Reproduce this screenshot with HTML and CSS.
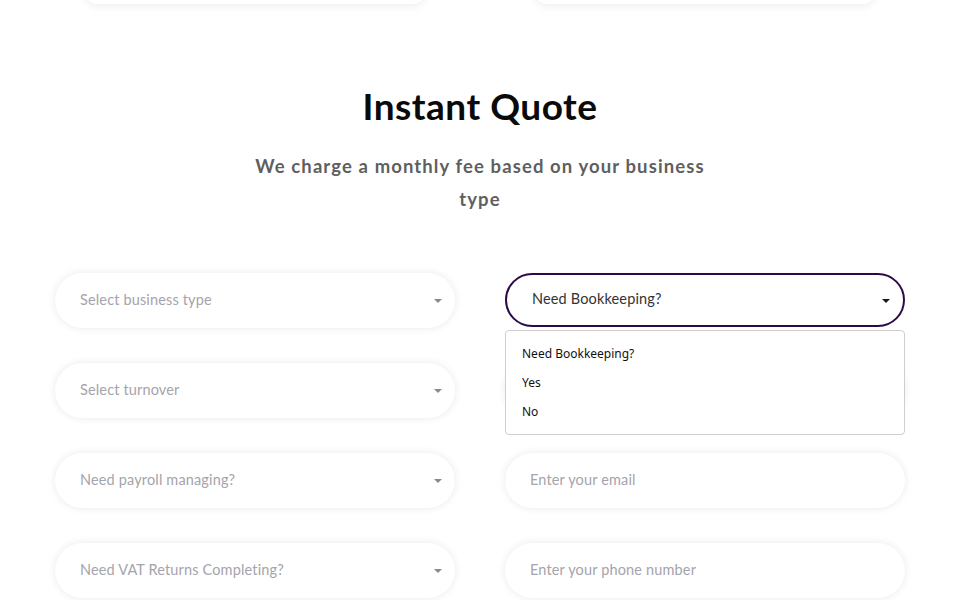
FILE: index.html
```html
<!DOCTYPE html>
<html lang="en">
<head>
<meta charset="utf-8">
<title>Instant Quote</title>
<link rel="stylesheet" href="styles.css">
</head>
<body>
<div class="top-cards">
  <div class="card"></div>
  <div class="card"></div>
</div>
<section class="quote">
  <h1 class="title">Instant Quote</h1>
  <p class="subtitle">We charge a monthly fee based on your business type</p>
  <form class="form">
    <div class="field select"><span class="placeholder">Select business type</span><span class="caret"></span></div>
    <div class="field-wrap">
      <div class="field select focused"><span class="value">Need Bookkeeping?</span><span class="caret dark"></span></div>
      <ul class="dropdown">
        <li>Need Bookkeeping?</li>
        <li>Yes</li>
        <li>No</li>
      </ul>
    </div>
    <div class="field select"><span class="placeholder">Select turnover</span><span class="caret"></span></div>
    <div class="field"></div>
    <div class="field select"><span class="placeholder">Need payroll managing?</span><span class="caret"></span></div>
    <div class="field"><span class="placeholder">Enter your email</span></div>
    <div class="field select"><span class="placeholder">Need VAT Returns Completing?</span><span class="caret"></span></div>
    <div class="field"><span class="placeholder">Enter your phone number</span></div>
  </form>
</section>
</body>
</html>
```

FILE: styles.css
```css
* { box-sizing: border-box; }
html, body { margin: 0; padding: 0; background: #fff; }
body {
  font-family: Lato, "Noto Sans", sans-serif;
  width: 960px;
  height: 600px;
  overflow: hidden;
}
.top-cards {
  display: flex;
  justify-content: center;
  gap: 110px;
  margin-top: -100px;
}
.card {
  width: 340px;
  height: 104px;
  background: #fff;
  border-radius: 12px;
  box-shadow: 0 2px 10px rgba(0,0,0,0.07);
}
.quote {
  display: flex;
  flex-direction: column;
  align-items: center;
}
.title {
  margin: 80px 0 0;
  font-size: 37px;
  line-height: 44px;
  font-weight: 700;
  color: #0a0a0a;
  letter-spacing: 0.5px;
}
.subtitle {
  margin: 22px 0 0;
  max-width: 470px;
  text-align: center;
  font-size: 18.5px;
  line-height: 33px;
  font-weight: 700;
  color: #5f5f5f;
  letter-spacing: 1.1px;
}
.form {
  margin: 57px 0 0;
  width: 850px;
  display: grid;
  grid-template-columns: 400px 400px;
  column-gap: 50px;
  row-gap: 35px;
}
.field-wrap { position: relative; }
.field {
  height: 55px;
  border-radius: 28px;
  background: #fff;
  box-shadow: 0 0 9px rgba(0,0,0,0.09);
  display: flex;
  align-items: center;
  padding: 0 25px 3px;
  font-size: 14.5px;
}
.placeholder { color: #a4a4ac; flex: 1; letter-spacing: 0.15px; }
.value { color: #333; flex: 1; letter-spacing: 0.15px; }
.field.focused {
  border: 2px solid #2b0a47;
  box-shadow: none;
  height: 54px;
  padding: 0 13px 3px 25px;
}
.caret {
  width: 0;
  height: 0;
  border-left: 4px solid transparent;
  border-right: 4px solid transparent;
  border-top: 4px solid #8a8a8a;
  margin-right: -12px;
  margin-top: 4px;
}
.caret.dark { border-top-color: #1a1a1a; margin-right: 0; }
.dropdown {
  position: absolute;
  top: 57px;
  left: 0;
  width: 400px;
  margin: 0;
  padding: 8px 0;
  list-style: none;
  background: #fff;
  border: 1px solid #cfcfcf;
  border-radius: 4px;
  z-index: 2;
  font-family: "Noto Sans", sans-serif;
  font-size: 12px;
  color: #111;
}
.dropdown li {
  height: 29px;
  line-height: 29px;
  padding-left: 16px;
}
```
